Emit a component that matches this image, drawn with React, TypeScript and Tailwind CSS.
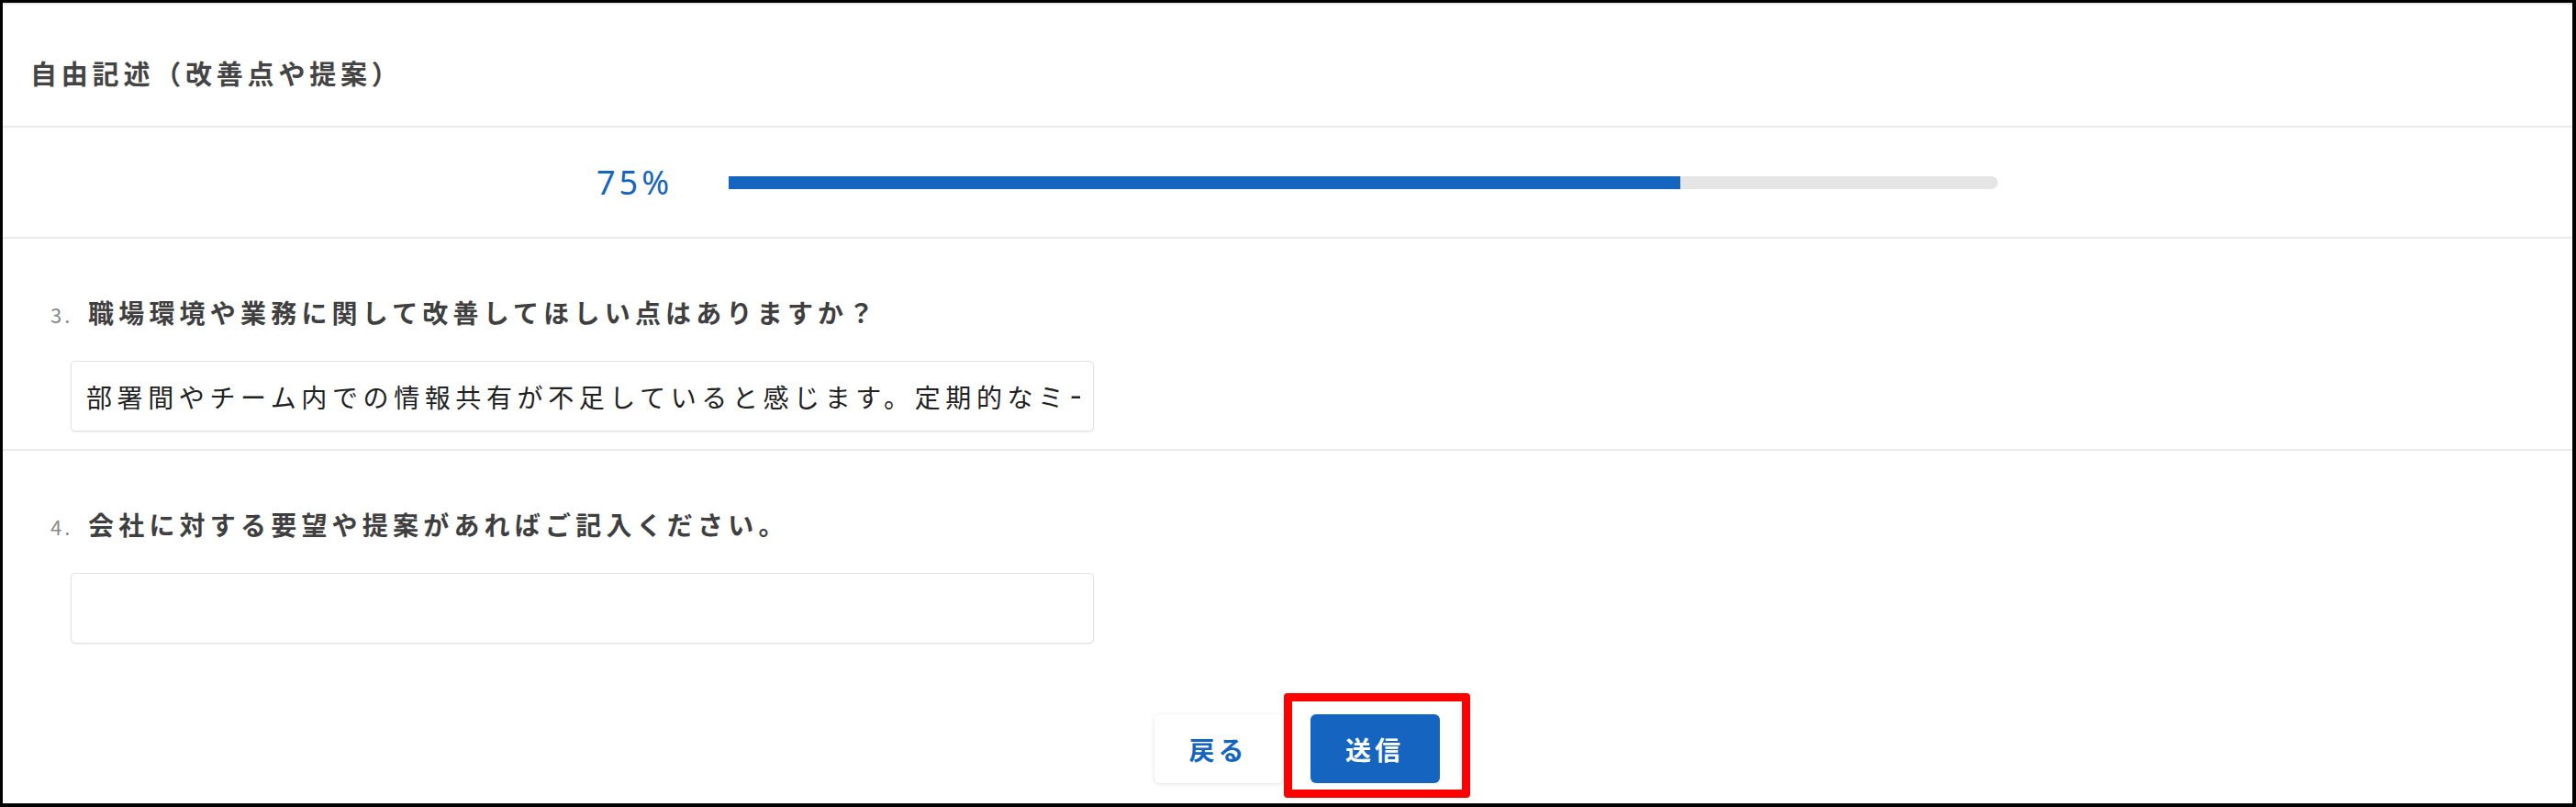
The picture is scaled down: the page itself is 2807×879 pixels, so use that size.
const jp = { fontFamily: '"Noto Sans CJK JP", "Noto Sans", sans-serif' }

const QuestionBlock = ({
  no,
  label,
  value,
  last = false,
}: {
  no: string
  label: string
  value: string
  last?: boolean
}) => (
  <section className={`pt-[60px] ${last ? '' : 'pb-[19px] border-b-2 border-[#ebebeb]'}`}>
    <div className="flex items-baseline pl-[52px]">
      <span className="w-[41px] text-[22px] tracking-[3px] text-[#8a8a8a]">{no}</span>
      <span className="text-[28px] leading-[40px] font-bold tracking-[5.2px] text-[#3f3f3f]">{label}</span>
    </div>
    <input
      readOnly
      value={value}
      className="mt-[33px] ml-[74px] block h-[77px] w-[1115px] rounded-[5px] border border-[#e2e2e2] bg-white pl-[16px] pr-[14px] text-[28px] tracking-[5.6px] text-[#222] shadow-[0_1px_2px_rgba(0,0,0,0.07)] outline-none"
    />
  </section>
)

export default function App() {
  const progress = 75

  return (
    <div style={jp} className="w-[2807px] h-[879px] overflow-hidden bg-white border-t-[3px] border-l-[3px] border-r-4 border-b-4 border-black">
      <div className="flex flex-col border-t-2 border-[#e8e8e8]">
        <header className="h-[134px] pt-[54px] pl-[30px] border-b-2 border-[#ebebeb]">
          <h1 className="text-[29px] leading-[40px] font-bold tracking-[4.8px] text-[#444]">自由記述（改善点や提案）</h1>
        </header>

        <div className="flex h-[121px] items-center pl-[647px] border-b-2 border-[#ebebeb]">
          <span
            className="w-[144px] text-[36px] leading-none tracking-[4px] text-[#1565c0]"
            style={{ fontFamily: '"Noto Sans", sans-serif' }}
          >
            {progress}%
          </span>
          <div className="h-[14px] w-[1383px] overflow-hidden rounded-r-full bg-[#e5e5e5]">
            <div className="h-full bg-[#1565c0]" style={{ width: `${progress}%` }} />
          </div>
        </div>

        <QuestionBlock
          no="3."
          label="職場環境や業務に関して改善してほしい点はありますか？"
          value="部署間やチーム内での情報共有が不足していると感じます。定期的なミーティングの機会を増やしてほしいです。"
        />
        <QuestionBlock no="4." label="会社に対する要望や提案があればご記入ください。" value="" last />

        <div className="mt-[77px] flex justify-center gap-[30px] pl-[20px]">
          <button className="h-[75px] w-[140px] rounded-[6px] bg-white text-[28px] font-bold tracking-[4px] text-[#1565c0] shadow-[0_1px_5px_rgba(0,0,0,0.12)]">
            戻る
          </button>
          <div className="relative">
            <button className="h-[75px] w-[141px] rounded-[6px] bg-[#1565c0] text-[28px] font-bold tracking-[4px] text-white">
              送信
            </button>
            <div className="pointer-events-none absolute -left-[29px] -right-[33px] -top-[23px] -bottom-[16px] rounded-[4px] border-[9px] border-[#ff0000]" />
          </div>
        </div>
      </div>
    </div>
  )
}
